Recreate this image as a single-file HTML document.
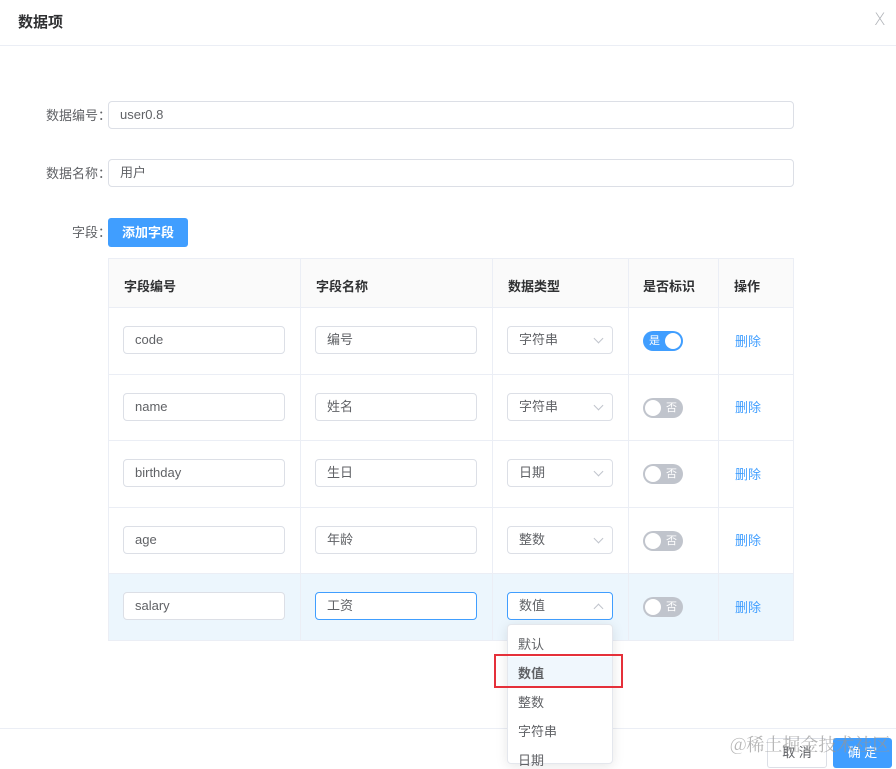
<!DOCTYPE html>
<html><head><meta charset="utf-8"><style>
*{box-sizing:border-box;margin:0;padding:0}
body{width:896px;height:757px;background:#fff;position:relative;overflow:hidden;font-family:"Liberation Sans","Noto Sans CJK SC",sans-serif;font-size:13px;color:#606266}
.a{position:absolute}
.inp{position:absolute;height:28px;border:1px solid #dcdfe6;border-radius:4px;background:#fff;padding-left:11px;line-height:26px;font-size:13px;color:#606266}
.lbl{position:absolute;right:785px;font-size:13px;color:#606266;white-space:nowrap}
.th{position:absolute;top:276px;font-weight:bold;color:#303133;font-size:13px}
.hl{position:absolute;left:108px;width:686px;height:1px;background:#ebeef5}
.vl{position:absolute;top:258px;width:1px;height:382px;background:#ebeef5}
.sw{position:absolute;left:643px;width:40px;height:20px;border-radius:10px;background:#c0c4cc}
.sw i{position:absolute;top:2px;width:16px;height:16px;border-radius:50%;background:#fff}
.sw span{position:absolute;top:2px;font-size:11px;color:#fff;line-height:16px}
.del{position:absolute;left:735px;color:#409eff;font-size:13px}
.arr{position:absolute;right:10px;top:8px;width:7px;height:7px;border-right:1px solid #c0c4cc;border-bottom:1px solid #c0c4cc;transform:rotate(45deg)}
.opt{position:absolute;left:518px;font-size:13px;color:#606266}
</style></head><body>
<div class="a" style="left:18px;top:11px;font-size:15px;font-weight:bold;color:#303133">数据项</div>
<div class="a" style="left:874px;top:10px;font-size:17px;color:#b0b3b8;font-family:'DejaVu Sans',sans-serif;font-weight:100">X</div>
<div class="a" style="left:0;top:45px;width:896px;height:1px;background:#ebeef5"></div>

<div class="lbl" style="top:105px">数据编号：</div>
<div class="inp" style="left:108px;top:101px;width:686px">user0.8</div>
<div class="lbl" style="top:163px">数据名称：</div>
<div class="inp" style="left:108px;top:159px;width:686px">用户</div>
<div class="lbl" style="top:222px">字段：</div>
<div class="a" style="left:108px;top:218px;width:80px;height:29px;background:#409eff;border-radius:3px;color:#fff;font-weight:bold;text-align:center;line-height:29px">添加字段</div>

<div class="a" style="left:108px;top:258px;width:686px;height:49px;background:#fafafa"></div>
<div class="a" style="left:108px;top:573px;width:686px;height:67px;background:#ecf6fd"></div>
<div class="hl" style="top:258px"></div><div class="hl" style="top:307px"></div><div class="hl" style="top:374px"></div><div class="hl" style="top:440px"></div><div class="hl" style="top:507px"></div><div class="hl" style="top:573px"></div><div class="hl" style="top:640px"></div>
<div class="vl" style="left:108px"></div><div class="vl" style="left:300px"></div><div class="vl" style="left:492px"></div><div class="vl" style="left:628px"></div><div class="vl" style="left:718px"></div><div class="vl" style="left:793px"></div>
<div class="th" style="left:124px">字段编号</div><div class="th" style="left:316px">字段名称</div><div class="th" style="left:508px">数据类型</div><div class="th" style="left:643px">是否标识</div><div class="th" style="left:734px">操作</div>

<div class="inp" style="left:123px;top:326px;width:162px">code</div>
<div class="inp" style="left:315px;top:326px;width:162px">编号</div>
<div class="inp" style="left:507px;top:326px;width:106px">字符串<i class="arr"></i></div>
<div class="sw" style="top:331px;background:#409eff"><span style="left:6px">是</span><i style="left:22px"></i></div>
<div class="del" style="top:331px">删除</div>

<div class="inp" style="left:123px;top:393px;width:162px">name</div>
<div class="inp" style="left:315px;top:393px;width:162px">姓名</div>
<div class="inp" style="left:507px;top:393px;width:106px">字符串<i class="arr"></i></div>
<div class="sw" style="top:398px"><i style="left:2px"></i><span style="left:23px">否</span></div>
<div class="del" style="top:397px">删除</div>

<div class="inp" style="left:123px;top:459px;width:162px">birthday</div>
<div class="inp" style="left:315px;top:459px;width:162px">生日</div>
<div class="inp" style="left:507px;top:459px;width:106px">日期<i class="arr"></i></div>
<div class="sw" style="top:464px"><i style="left:2px"></i><span style="left:23px">否</span></div>
<div class="del" style="top:464px">删除</div>

<div class="inp" style="left:123px;top:526px;width:162px">age</div>
<div class="inp" style="left:315px;top:526px;width:162px">年龄</div>
<div class="inp" style="left:507px;top:526px;width:106px">整数<i class="arr"></i></div>
<div class="sw" style="top:531px"><i style="left:2px"></i><span style="left:23px">否</span></div>
<div class="del" style="top:530px">删除</div>

<div class="inp" style="left:123px;top:592px;width:162px">salary</div>
<div class="inp" style="left:315px;top:592px;width:162px;border-color:#409eff">工资</div>
<div class="inp" style="left:507px;top:592px;width:106px;border-color:#409eff">数值<i class="arr" style="transform:rotate(225deg);top:12px"></i></div>
<div class="sw" style="top:597px"><i style="left:2px"></i><span style="left:23px">否</span></div>
<div class="del" style="top:597px">删除</div>

<div class="a" style="left:0;top:728px;width:896px;height:1px;background:#ebeef5"></div>
<div class="a" style="left:767px;top:738px;width:60px;height:30px;border:1px solid #dcdfe6;border-radius:3px;text-align:center;line-height:28px;color:#606266">取 消</div>
<div class="a" style="left:833px;top:738px;width:59px;height:30px;background:#409eff;border-radius:3px;text-align:center;line-height:30px;color:#fff">确 定</div>
<div class="a" style="left:730px;top:731px;font-size:18px;color:rgba(150,150,150,0.7);font-family:'Noto Serif CJK SC',serif">@稀土掘金技术社区</div>

<div class="a" style="left:507px;top:624px;width:106px;height:140px;background:#fff;border:1px solid #e4e7ed;border-radius:4px;box-shadow:0 2px 12px rgba(0,0,0,.1)"></div>
<div class="a" style="left:508px;top:657px;width:104px;height:29px;background:#f0f7fd"></div>
<div class="opt" style="top:634px">默认</div>
<div class="opt" style="top:663px;font-weight:bold">数值</div>
<div class="opt" style="top:692px">整数</div>
<div class="opt" style="top:721px">字符串</div>
<div class="opt" style="top:750px">日期</div>
<div class="a" style="left:494px;top:654px;width:129px;height:34px;border:2px solid #e5303a"></div>
</body></html>
